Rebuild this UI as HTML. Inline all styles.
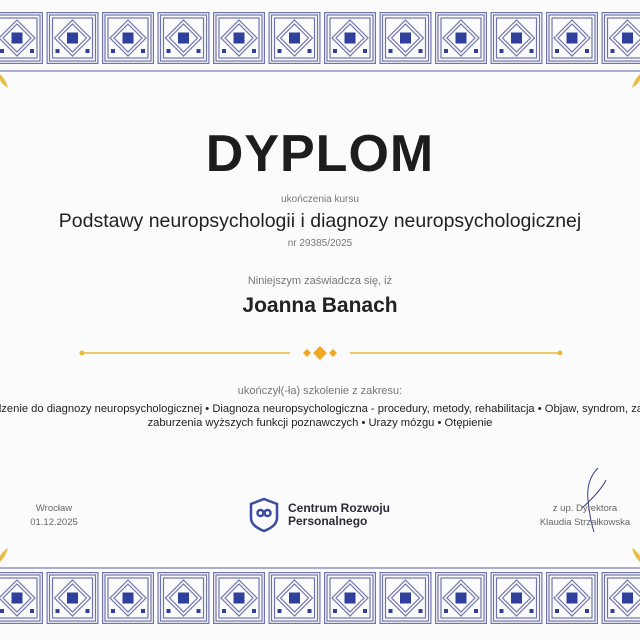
<!DOCTYPE html>
<html><head><meta charset="utf-8"><style>
body{margin:0;width:640px;height:640px;overflow:hidden;background:#fbfbfb;font-family:"Liberation Sans",sans-serif;position:relative}
.t{position:absolute;left:0;width:640px;text-align:center;white-space:nowrap}
.f{position:absolute;left:0;width:640px;overflow:hidden;display:flex;justify-content:center;white-space:nowrap}
</style></head><body>
<svg width="640" height="640" style="position:absolute;left:0;top:0">
<defs>
<pattern id="tile" x="-9" y="0" width="55.5" height="80" patternUnits="userSpaceOnUse">
<g transform="translate(0,12)" fill="none" stroke="#6f74ab" stroke-width="1.2">
<rect x="0.6" y="0.6" width="50.8" height="50.8"/>
<rect x="3" y="3" width="46" height="46"/>
<rect x="6" y="6" width="40" height="40"/>
<path d="M26 8 L44 26 L26 44 L8 26Z"/>
<path d="M26 12 L40 26 L26 40 L12 26Z"/>
<rect x="20.5" y="20.5" width="11" height="11" fill="#2f3f9c" stroke="none"/>
<rect x="9" y="37" width="4" height="4" fill="#2f3f9c" stroke="none"/>
<rect x="39" y="37" width="4" height="4" fill="#2f3f9c" stroke="none"/>
</g>
</pattern>
</defs>
<rect x="0" y="0" width="640" height="66" fill="url(#tile)"/>
<rect x="0" y="562" width="640" height="66" fill="url(#tile)"/>
<line x1="0" y1="71" x2="640" y2="71" stroke="#7a7fb0" stroke-width="1.2"/>
<line x1="0" y1="568" x2="640" y2="568" stroke="#7a7fb0" stroke-width="1.2"/>
<path d="M0 74 Q6 80 8 88 Q2 84 0 80Z" fill="#e9bb45"/>
<path d="M0 562 Q6 556 8 548 Q2 552 0 556Z" fill="#e9bb45"/>
<path d="M640 74 Q634 80 632 88 Q638 84 640 80Z" fill="#e9bb45"/>
<path d="M640 562 Q634 556 632 548 Q638 552 640 556Z" fill="#e9bb45"/>
<line x1="82" y1="353" x2="290" y2="353" stroke="#e8b93a" stroke-width="1.5"/>
<line x1="350" y1="353" x2="560" y2="353" stroke="#e8b93a" stroke-width="1.5"/>
<circle cx="82" cy="353" r="2.5" fill="#e8b93a"/><circle cx="560" cy="353" r="2.5" fill="#e8b93a"/>
<path d="M307 349 L311 353 L307 357 L303 353Z M320 346 L327 353 L320 360 L313 353Z M333 349 L337 353 L333 357 L329 353Z" fill="#f0a824"/>
<g transform="translate(250,498)" fill="none" stroke="#3b4aa0" stroke-width="2.5">
<path d="M14 1 L27 6 L27 20 Q27 28 14 33 Q1 28 1 20 L1 6Z"/>
<circle cx="10.5" cy="15" r="3"/><circle cx="17.5" cy="15" r="3"/>
</g>
<path d="M598 468 Q586 480 588 500 Q590 520 594 532 M582 508 Q600 492 606 480" fill="none" stroke="#3a3f8a" stroke-width="1"/>
</svg>
<div class="t" style="top:124px;font-size:52px;font-weight:bold;color:#1d1d1d;letter-spacing:1px">DYPLOM</div>
<div class="t" style="top:194px;font-size:10px;color:#777">ukończenia kursu</div>
<div class="t" style="top:210px;font-size:19.5px;color:#222">Podstawy neuropsychologii i diagnozy neuropsychologicznej</div>
<div class="t" style="top:238px;font-size:10px;color:#777">nr 29385/2025</div>
<div class="t" style="top:275px;font-size:11px;color:#777">Niniejszym zaświadcza się, iż</div>
<div class="t" style="top:294px;font-size:21px;color:#222;font-weight:600">Joanna Banach</div>
<div class="t" style="top:385px;font-size:11px;color:#777">ukończył(-ła) szkolenie z zakresu:</div>
<div class="f" style="top:403px;font-size:11.2px;color:#222"><span>Wprowadzenie do diagnozy neuropsychologicznej • Diagnoza neuropsychologiczna - procedury, metody, rehabilitacja • Objaw, syndrom, zaburzenie</span></div>
<div class="t" style="top:417px;font-size:11.2px;color:#222">zaburzenia wyższych funkcji poznawczych • Urazy mózgu • Otępienie</div>
<div style="position:absolute;left:14px;width:80px;top:502px;text-align:center;font-size:9.5px;color:#666;line-height:14px">Wrocław<br>01.12.2025</div>
<div style="position:absolute;left:288px;top:502px;font-size:12px;font-weight:bold;color:#2a2a3a;line-height:13px">Centrum Rozwoju<br>Personalnego</div>
<div style="position:absolute;left:530px;width:110px;top:502px;text-align:center;font-size:9.5px;color:#666;line-height:14px;white-space:nowrap">z up. Dyrektora<br>Klaudia Strzałkowska</div>
</body></html>
